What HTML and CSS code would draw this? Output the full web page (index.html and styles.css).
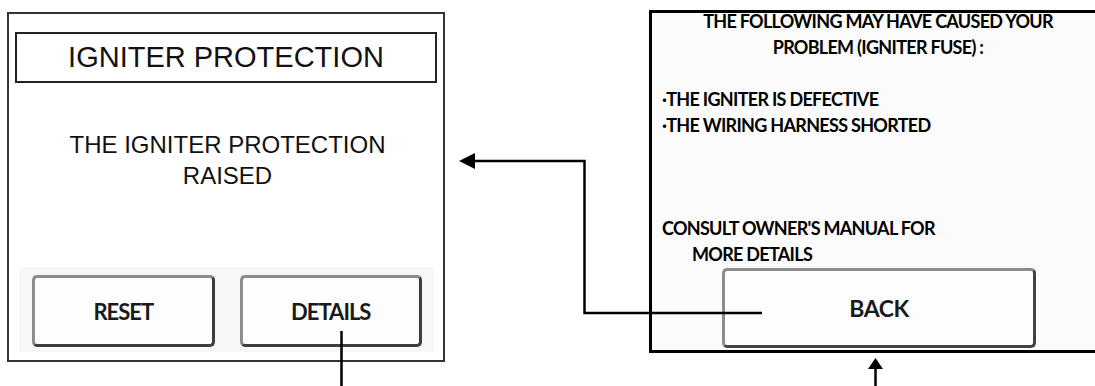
FILE: index.html
```html
<!DOCTYPE html>
<html lang="en">
   <head>
      <meta charset="UTF-8">
      <meta name="viewport" content="width=device-width, initial-scale=1.0">
      <title>Igniter protection screens</title>
      <link rel="stylesheet" href="styles.css">
   </head>
   <body>
      <div class="canvas">
         <div class="screen screen-alarm">
            <div class="alarm-title">IGNITER PROTECTION</div>
            <p class="alarm-message">THE IGNITER PROTECTION<br>RAISED</p>
            <div class="button-bar">
               <div class="hmi-button">RESET</div>
               <div class="hmi-button">DETAILS</div>
            </div>
         </div>
         <div class="screen screen-details">
            <p class="details-head">THE FOLLOWING MAY HAVE CAUSED YOUR<br>PROBLEM (IGNITER FUSE) :</p>
            <ul class="causes">
               <li>·THE IGNITER IS DEFECTIVE</li>
               <li>·THE WIRING HARNESS SHORTED</li>
            </ul>
            <p class="consult">CONSULT OWNER'S MANUAL FOR<br><span class="indent">MORE DETAILS</span></p>
            <div class="hmi-button back-button">BACK</div>
         </div>
         <svg class="links" width="1095" height="386" viewBox="0 0 1095 386">
            <polyline points="762,313 584.5,313 584.5,161 472,161" fill="none" stroke="#000" stroke-width="2.5"/>
            <polygon points="459,161 475,153 475,169" fill="#000"/>
            <line x1="341.5" y1="331" x2="341.5" y2="386" stroke="#000" stroke-width="2.5"/>
            <line x1="875.5" y1="366" x2="875.5" y2="386" stroke="#000" stroke-width="2.5"/>
            <polygon points="875.5,358 868,369 883,369" fill="#000"/>
         </svg>
      </div>
   </body>
</html>
```

FILE: styles.css
```css
body {
margin: 0;
background: #fff;
}
.canvas {
position: relative;
width: 1095px;
height: 386px;
overflow: hidden;
}
.screen {
position: absolute;
box-sizing: border-box;
display: flex;
flex-direction: column;
}
/* left screen: alarm */
.screen-alarm {
left: 7px;
top: 12px;
width: 438px;
height: 350px;
border: 2px solid #333;
padding: 18px 6px 8px 6px;
background: #fff;
font-family: "Liberation Sans", Arial, sans-serif;
color: #111;
}
.alarm-title {
box-sizing: border-box;
height: 51px;
border: 2px solid #222;
font-size: 29px;
line-height: 47px;
text-align: center;
}
.alarm-message {
margin: 46px 0 0 0;
font-size: 24px;
line-height: 31px;
text-align: center;
padding-left: 3px;
}
.button-bar {
margin: auto 3px 0 4px;
height: 85px;
box-sizing: border-box;
padding: 8px 12px 5px 13px;
display: flex;
gap: 25px;
background: #f7f7f7;
}
.hmi-button {
flex: 1;
box-sizing: border-box;
display: flex;
align-items: center;
justify-content: center;
border: 3px solid;
border-color: #8c8c8c #3e3e3e #3e3e3e #8c8c8c;
border-radius: 5px;
background: #fdfdfd;
font-family: Lato, "Open Sans", sans-serif;
font-weight: bold;
font-size: 22px;
letter-spacing: -1px;
color: #1a1a1a;
}
/* right screen: details */
.screen-details {
left: 649px;
top: 10px;
width: 458px;
height: 343px;
border: 3px solid #000;
background: #fbfbfb;
font-family: Lato, "Open Sans", sans-serif;
font-weight: bold;
font-size: 18px;
line-height: 26px;
letter-spacing: -0.7px;
color: #000;
}
.details-head {
margin: -5px 0 0 0;
text-align: center;
}
.causes {
list-style: none;
margin: 26px 0 0 0;
padding: 0 0 0 10px;
}
.consult {
margin: 77px 0 0 0;
padding-left: 10px;
}
.indent {
padding-left: 30px;
}
.back-button {
flex: none;
margin: 1px 0 0 70px;
width: 314px;
height: 80px;
font-size: 23px;
letter-spacing: -0.5px;
border-color: #8c8c8c #444 #444 #8c8c8c;
}
.links {
position: absolute;
left: 0;
top: 0;
pointer-events: none;
}
```
